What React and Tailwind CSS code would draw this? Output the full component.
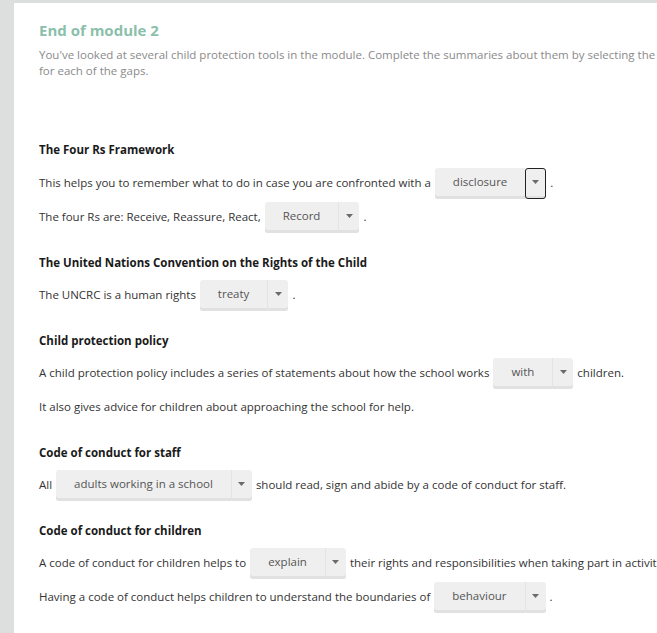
import React from "react";

function Drop({ text, focus }) {
  return (
    <span className="inline-flex h-[31px] mx-[4px] rounded-[3px] bg-[#efefef] shadow-[inset_0_-3px_0_#e1e1e1] shrink-0">
      <span className="flex items-center pb-[3px] px-[18px] text-[#555]">{text}</span>
      <span
        className={
          "w-[21px] flex items-center justify-center pb-[3px] " +
          (focus ? "border-[1.5px] border-[#222] rounded-[3px]" : "border-l border-[#e4e4e4]")
        }
      >
        <svg width="7" height="4" viewBox="0 0 7 4">
          <path d="M0 0 L7 0 L3.5 4 Z" fill="#6b6b6b" />
        </svg>
      </span>
    </span>
  );
}

function Row({ children }) {
  return <div className="flex items-center h-[34px] whitespace-nowrap">{children}</div>;
}

function Section({ title, children, first }) {
  return (
    <div className={first ? "mt-[61px]" : "mt-[19px]"}>
      <div className={"h-[20px] flex items-center text-[11.5px] font-bold text-[#1a1a1a] " + (first ? "mb-[6px]" : "mb-[5px]")}>{title}</div>
      {children}
    </div>
  );
}

export default function App() {
  return (
    <div className="w-[657px] h-[633px] overflow-hidden bg-[#dcdfdd] pt-[3px] pl-[14px]" style={{ fontFamily: '"Open Sans", sans-serif' }}>
      <div className="bg-white h-full w-[700px] pl-[25px] pt-[17px] text-[11.5px] text-[#333]">
        <div className="h-[20px] flex items-center text-[15px] font-bold text-[#8bbfab]">End of module 2</div>
        <div className="mt-[7px] w-[660px] leading-[16px] text-[#8a8a8a] whitespace-nowrap">
          You've looked at several child protection tools in the module. Complete the summaries about them by selecting the
          <br />
          for each of the gaps.
        </div>

        <Section title="The Four Rs Framework" first>
          <Row>
            This helps you to remember what to do in case you are confronted with a
            <Drop text="disclosure" focus />.
          </Row>
          <Row>
            The four Rs are: Receive, Reassure, React,
            <Drop text="Record" />.
          </Row>
        </Section>

        <Section title="The United Nations Convention on the Rights of the Child">
          <Row>
            The UNCRC is a human rights
            <Drop text="treaty" />.
          </Row>
        </Section>

        <Section title="Child protection policy">
          <Row>
            A child protection policy includes a series of statements about how the school works
            <Drop text="with" />
            children.
          </Row>
          <Row>It also gives advice for children about approaching the school for help.</Row>
        </Section>

        <Section title="Code of conduct for staff">
          <Row>
            All
            <Drop text="adults working in a school" />
            should read, sign and abide by a code of conduct for staff.
          </Row>
        </Section>

        <Section title="Code of conduct for children">
          <Row>
            A code of conduct for children helps to
            <Drop text="explain" />
            their rights and responsibilities when taking part in activities.
          </Row>
          <Row>
            Having a code of conduct helps children to understand the boundaries of
            <Drop text="behaviour" />.
          </Row>
        </Section>
      </div>
    </div>
  );
}
